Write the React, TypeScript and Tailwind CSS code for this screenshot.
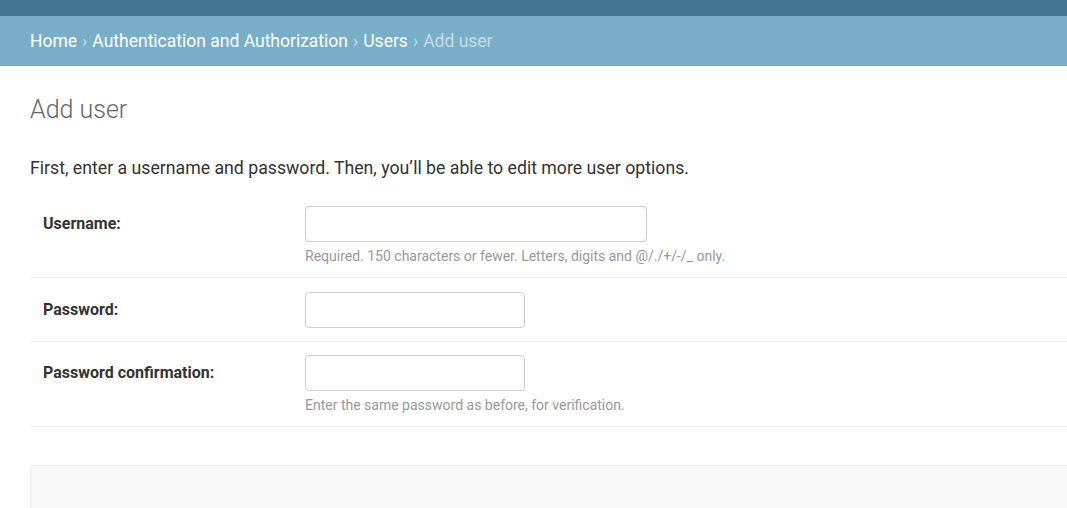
import React from 'react';

const font = { fontFamily: 'Roboto, "Liberation Sans", sans-serif' };

const rows = [
  { label: 'Username:', width: 'w-[342px]', help: 'Required. 150 characters or fewer. Letters, digits and @/./+/-/_ only.' },
  { label: 'Password:', width: 'w-[220px]', help: '' },
  { label: 'Password confirmation:', width: 'w-[220px]', help: 'Enter the same password as before, for verification.' },
];

export default function App() {
  return (
    <div className="min-h-[508px] bg-white text-[#333] overflow-hidden" style={font}>
      <div className="h-4 bg-[#417690]" />
      <div className="h-[50px] bg-[#79aec8] px-[30px] pt-px flex items-center text-[17.5px] text-white">
        <span>Home</span>
        <span className="mx-[5px] text-[#c4dce8]">›</span>
        <span>Authentication and Authorization</span>
        <span className="mx-[5px] text-[#c4dce8]">›</span>
        <span>Users</span>
        <span className="mx-[5px] text-[#c4dce8]">›</span>
        <span className="text-[#c4dce8]">Add user</span>
      </div>

      <div className="pl-[30px] pt-[28px] w-[1100px]">
        <h1 className="text-[25px] font-light text-[#666] leading-8">Add user</h1>
        <p className="mt-[30px] text-[17.7px] leading-6">
          First, enter a username and password. Then, you’ll be able to edit more user options.
        </p>

        <div className="mt-[12px]">
          {rows.map((r) => (
            <div key={r.label} className="flex border-b border-[#eee] px-[13px] pt-[14px] pb-[13px] last:pt-[13px]">
              <label className="w-[262px] h-9 flex items-center text-[16px] font-bold text-[#333]">{r.label}</label>
              <div>
                <input type="text" className={`${r.width} h-9 border border-[#ccc] rounded-[4px] outline-none`} />
                {r.help && <div className="mt-[6px] text-[14px] text-[#999] leading-4">{r.help}</div>}
              </div>
            </div>
          ))}
        </div>

        <div className="mt-[38px] h-[60px] bg-[#f8f8f8] border border-[#eee] rounded-[4px]" />
      </div>
    </div>
  );
}
